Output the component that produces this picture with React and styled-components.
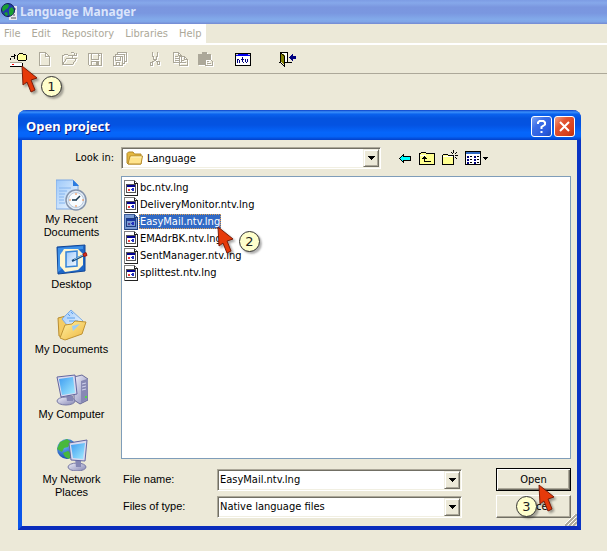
import React, { useState } from 'react'
import styled, { createGlobalStyle } from 'styled-components'

const GlobalStyle = createGlobalStyle`
  * {
    box-sizing: border-box;
  }
  body {
    margin: 0;
    background: #ece9d8;
    color: #000;
    font-family: "DejaVu Sans Condensed", "Liberation Sans", sans-serif;
    font-size: 11px;
    line-height: 13px;
  }
  button, input, select {
    margin: 0;
    padding: 0;
    border: 0;
    border-radius: 0;
    background: none;
    color: inherit;
    font: inherit;
    outline: none;
  }
`

/* main window */

const Page = styled.div`
  min-height: 100vh;
  overflow: hidden;
`

const TitleBar = styled.header`
  display: flex;
  align-items: center;
  gap: 3px;
  height: 24px;
  padding-left: 1px;
  background: linear-gradient(#7d9ce4, #86a8ea 12%, #7a96df 30%, #7a97e0 55%, #82aaea 80%, #80a6e8 90%, #7389d2);
`

const Title = styled.h1`
  margin: 0;
  color: #dbe5fb;
  font: bold 12px/20px "Noto Sans", sans-serif;
`

const MenuBar = styled.nav`
  display: flex;
  border-bottom: 2px solid #fff;
`

const MenuList = styled.div`
  display: flex;
  gap: 11px;
  height: 19px;
  padding: 0 4px;
  background: #fff;
`

const MenuButton = styled.button`
  color: #aca899;
  line-height: 19px;
`

const Toolbar = styled.div`
  display: flex;
  align-items: center;
  height: 29px;
  padding-left: 8px;
  border-bottom: 1px solid #aca899;
`

const ToolGroup = styled.div`
  display: flex;
  margin-right: ${props => props.$space || 0}px;
`

const ToolButton = styled.button`
  display: flex;
  align-items: center;
  justify-content: center;
  width: 25px;
  height: 24px;
`

/* numbered pointers */

const Anchor = styled.div`
  position: relative;
  display: flex;
`

const Pointer = styled.svg`
  position: absolute;
  z-index: 2;
  left: ${props => props.$x}px;
  top: ${props => props.$y}px;
  pointer-events: none;
  filter: drop-shadow(2px 2px 1px rgba(0, 0, 0, 0.35));
`

const Bubble = styled.span`
  position: absolute;
  z-index: 3;
  left: ${props => props.$x}px;
  top: ${props => props.$y}px;
  width: 21px;
  height: 21px;
  border: 1px solid #333;
  border-radius: 50%;
  background: #ffffcc;
  box-shadow: 2px 2px 2px rgba(0, 0, 0, 0.3);
  color: #222;
  font: 13px/19px "DejaVu Sans", sans-serif;
  text-align: center;
  pointer-events: none;
`

/* dialog */

const Dialog = styled.section`
  margin: 36px 26px 22px 18px;
  border: solid;
  border-width: 0 4px 4px;
  border-color: #0a4fe0 #0a34c4 #0a2cbc #0a55ea;
  border-radius: 8px 8px 0 0;
  background: #ece9d8;
`

const DialogTitle = styled.div`
  display: flex;
  align-items: center;
  gap: 2px;
  height: 30px;
  margin: 0 -4px;
  padding: 2px 6px 0 8px;
  border-radius: 8px 8px 0 0;
  background: linear-gradient(#0a3fc8, #3a8ffa 7%, #0a62ee 14%, #0453df 28%, #0453e2 50%, #0566fb 75%, #0564f8 88%, #0340c8);
`

const DialogHeading = styled.h2`
  flex: 1;
  margin: 0;
  color: #fff;
  font: bold 13px/20px "Noto Sans", sans-serif;
  text-shadow: 1px 1px 0 #0a1883;
`

const CaptionButton = styled.button`
  display: flex;
  align-items: center;
  justify-content: center;
  width: 21px;
  height: 21px;
  border: 1px solid #fff;
  border-radius: 3px;
  background: ${props => props.$close
    ? 'linear-gradient(135deg, #f0a088, #e25430 35%, #d8401c 75%, #b83010)'
    : 'linear-gradient(135deg, #7ea4f4, #3c6ee8 35%, #2a5ce0 75%, #1c48b8)'};
`

const Form = styled.form`
  position: relative;
  display: grid;
  grid-template-columns: 99px 1fr;
  padding: 7px 6px 8px 0;
`

const LookLabel = styled.label`
  padding-right: 7px;
  line-height: 22px;
  text-align: right;
`

const LookRow = styled.div`
  display: flex;
  align-items: center;
  margin-bottom: 7px;
`

const LookBox = styled.div`
  flex: 0 1 260px;
`

const NavTools = styled.div`
  display: flex;
  gap: 7px;
  margin-left: 17px;
`

const NavButton = styled.button`
  display: flex;
  height: 16px;
`

const ComboFrame = styled.div`
  display: flex;
  align-items: center;
  height: 22px;
  padding: 1px;
  border: 1px solid;
  border-color: #aca899 #fff #fff #aca899;
  background: #fff;
  box-shadow: inset 1px 1px 0 #716f64, inset -1px -1px 0 #f1efe2;
`

const comboText = `
  flex: 1;
  min-width: 0;
  height: 18px;
  padding: 0 1px;
  appearance: none;
`

const Select = styled.select`
  ${comboText}
`

const TextInput = styled.input`
  ${comboText}
`

const FolderSlot = styled.span`
  display: flex;
  padding: 0 2px 0 3px;
`

const Drop = styled.span`
  display: flex;
  align-items: center;
  justify-content: center;
  width: 16px;
  height: 18px;
  border: 1px solid;
  border-color: #f1efe2 #716f64 #716f64 #f1efe2;
  background: #ece9d8;
  box-shadow: inset 1px 1px 0 #fff, inset -1px -1px 0 #aca899;
  pointer-events: none;
`

const Places = styled.nav`
  padding-top: 3px;
`

const Place = styled.button`
  display: flex;
  flex-direction: column;
  align-items: center;
  gap: 2px;
  width: 99px;
  height: 65px;
  font-family: "Liberation Sans", sans-serif;
`

const PlaceLabel = styled.span`
  max-width: 80px;
`

const Main = styled.div`
  display: flex;
  flex-direction: column;
`

const FileList = styled.ul`
  height: 283px;
  margin: 0 0 9px;
  padding: 2px;
  border: 1px solid #7f9db9;
  background: #fff;
  list-style: none;
`

const FileItem = styled.li`
  display: flex;
  height: 17px;
`

const FileButton = styled.button`
  display: flex;
  align-items: center;
`

const FileName = styled.span`
  height: 15px;
  border: 1px dotted ${props => (props.$selected ? '#e0a050' : 'transparent')};
  background: ${props => (props.$selected ? '#316ac5' : 'transparent')};
  color: ${props => (props.$selected ? '#fff' : '#000')};
`

const Bottom = styled.div`
  display: grid;
  grid-template-columns: 94px 1fr 75px;
  row-gap: 4px;
  align-items: center;
  padding-left: 2px;
`

const FieldLabel = styled.label`
  font-family: "Liberation Sans", sans-serif;
`

const FieldBox = styled.div`
  margin-right: 34px;
`

const PushButton = styled.button`
  width: 75px;
  height: 23px;
  border: 1px solid;
  border-color: ${props => (props.$primary ? '#000' : '#fff #716f64 #716f64 #fff')};
  background: #ece9d8;
  box-shadow: ${props => (props.$primary
    ? 'inset 1px 1px 0 #fff, inset -1px -1px 0 #716f64, inset -2px -2px 0 #aca899'
    : 'inset -1px -1px 0 #aca899')};
`

const Grip = styled.svg`
  position: absolute;
  right: 0;
  bottom: 0;
`

/* icons */

const Pix = ({ w = 16, h = 16, children }) => (
  <svg width={w} height={h} viewBox={`0 0 ${w} ${h}`} fill="none" shapeRendering="crispEdges" aria-hidden="true">
    {children}
  </svg>
)

// greyed-out icon with its white edge one pixel down and right
const Disabled = ({ d, fill }) => (
  <Pix w={17} h={17}>
    <g transform="translate(1 1)">
      <path d={d} stroke="#fff" />
      {fill && <path d={fill} fill="#fff" />}
    </g>
    <path d={d} stroke="#aca899" />
    {fill && <path d={fill} fill="#aca899" />}
  </Pix>
)

const disabledIcons = {
  New: { d: 'M2.5 1.5h6l4 4v9h-10zM8.5 1.5v4h4' },
  Open: { d: 'M.5 13.5v-9h1l1-1h3l1 1h4v3M.5 13.5h10l4-6h-10l-4 6M8.5 2.5l1-1h2l1 1v2M11 4.5h3M14.5 2v3' },
  Save: { d: 'M1.5 2.5h13v12h-12l-1-1zM4.5 2.5v6h7v-6M4.5 14.5v-4h7v4M12.5 4v1', fill: 'M9 11h2v3h-2z' },
  'Save all': { d: 'M1.5 5.5h9v9h-9zM3.5 5v-1.5h9v9h-2M5.5 3v-1.5h9v9h-2M3.5 6v3h5v-3M4.5 14v-2.5h3v3' },
  Cut: { d: 'M5.5 1v4l1 1v2l4 3M10.5 1v4l-1 1v2l-4 3M3.5 11.5h2v3h-2zM10.5 10.5h2v3h-2z' },
  Copy: { d: 'M1.5 1.5h5l3 3v7h-8zM6.5 1.5v3h3M3 5.5h3M3 7.5h5M3 9.5h5M7.5 5.5h5l3 3v6h-8zM12.5 5.5v3h3M9 9.5h3M9 11.5h5' },
  Paste: { d: 'M8.5 8.5h5l2 2v4h-7zM10 10.5h2M10 12.5h4', fill: 'M1 3h4V1h5v2h4v5H8v6H1z' }
}

const disk = (
  <Pix w={23} h={17}>
    <path d="M9 4h1V3h4v1h3v5H9z" fill="#ffff9c" />
    <path d="M8.5 9V4M9 3.5h1M10 2.5h4M14 3.5h3M17.5 4v5M9 9.5h8" stroke="#000" />
    <path d="M1.5 8.5v-2M2 5.5h4M5 3.5h1M5 4.5h2M5 6.5h1M5 7.5h1" stroke="#000" />
    <path d="M1 11h12v4H1z" fill="#fff" />
    <path d="M1 11.500h12" stroke="#aca899" />
    <path d="M1 15.5h13M13.5 12v4" stroke="#000" />
    <path d="M3 13h2v1H3z" fill="#f00" />
  </Pix>
)

const ntv = (
  <Pix>
    <path d="M.5 2.5h15v12H.5z" fill="#fff" stroke="#000" />
    <path d="M1 3h14v2H1z" fill="#0000f0" />
    <path d="M1 3h2v1H1zM13 3h2v1h-2z" fill="#ccc" />
    <path d="M2.5 8v4M3 8.5h1M4.5 9v3M7.5 6v5M6 8.5h3M8 11.5h1M10.5 8v3M11.5 11v1M12.5 8v3" stroke="#000080" />
  </Pix>
)

const exit = (
  <Pix w={17} h={17}>
    <path d="M2 1h7v10H2z" fill="#fff" />
    <path d="M0 11.5h2M1.5 12V1.5h7v10M6 11.5h7" stroke="#000" />
    <path d="M2 2l4 2v11l-4-4z" fill="#808000" />
    <path d="M2 2.5h1M3 3.5h1M4 4.5h1M5.5 5v11M4 14.5h1M3 13.5h1M2 12.5h1" stroke="#000" />
    <path d="M10 6h1V5h1V4h1V3h1v2h3v3h-3v2h-1V9h-1V8h-1V7h-1z" fill="#000080" />
  </Pix>
)

const globe = (
  <svg width="16" height="18" viewBox="0 0 16 18" aria-hidden="true">
    <path d="M8 3h8v14H8z" fill="#e8e8f0" />
    <path d="M11 6h4M12 9h2M12 12h2M10 15h5" stroke="#555" />
    <circle cx="7" cy="7" r="6.5" fill="#2038a8" stroke="#111c58" />
    <path d="M2 3l4-2 2 1-1 3-3 2-2 2-1-3zM8 6l3-2 2 3-1 4-3 2-1-3zM3 10l3-1 1 3-2 1z" fill="#18a030" />
  </svg>
)

const folder = (
  <svg width="18" height="16" viewBox="0 0 18 16" aria-hidden="true">
    <path d="M1 13V3.5L2.5 2H7l1.5 2H15v10H2z" fill="#e4b840" stroke="#b48a28" />
    <path d="M2 14L4 6h12.5L15 14z" fill="#ffe48c" stroke="#b88d2c" />
    <path d="M5 7h10.5" stroke="#fff4c0" />
  </svg>
)

const back = (
  <Pix w={14}>
    <path d="M1 8h1V7h1V6h1V5h1v2h8v3H5v2H4v-1H3v-1H2V9H1z" fill="#0ff" />
    <path d="M1 8.5h1M2 7.5h1M3 6.5h1M4 5.5h1M5.5 4v3M5 6.5h8M12.5 7v4M5 10.5h8M5.5 10v3M4 11.5h1M3 10.5h1M2 9.5h1" stroke="#000" />
  </Pix>
)

const up = (
  <Pix>
    <path d="M.5 14.5v-11h1l1-1h4l1 1h8v11z" fill="#ffff90" stroke="#000" />
    <path d="M1 5.5h6" stroke="#fff" />
    <path d="M5.5 6v5.5h6M4 7.5h3M3 8.5h5" stroke="#000" />
  </Pix>
)

const newFolder = (
  <Pix>
    <path d="M.5 14.5v-9l1-1h4l1 1h5v9z" fill="#ffff90" stroke="#000" />
    <path d="M1 6.5h10" stroke="#fff" />
    <path d="M11.5 0v3M11.5 6v3M8 5.5h2M13 5.5h3M9 2.5h1M10 3.5h1M14 2.5h1M13 3.5h1M13 7.5h1M14 8.5h1" stroke="#000" />
  </Pix>
)

const views = (
  <Pix w={24}>
    <path d="M.5 1.5h15v13H.5z" fill="#fff" stroke="#000" />
    <path d="M1 2h14v2H1z" fill="#316ac5" />
    <path d="M2 6h2v2H2zM2 9h2v2H2zM2 12h2v2H2zM9 6h2v2H9zM9 9h2v2H9zM9 12h2v2H9z" fill="#000080" />
    <path d="M5 6.5h2M5 9.5h2M5 12.5h2M12 6.5h2M12 9.5h2M12 12.5h2" stroke="#000" />
    <path d="M18 7h5v1h-1v1h-1v1h-1V9h-1V8h-1z" fill="#000" />
  </Pix>
)

const FileIcon = ({ selected }) => (
  <Pix w={15}>
    <path d="M.5.5h10l3 3v12H.5z" fill={selected ? '#7a9cd4' : '#fff'} stroke={selected ? '#3c5c98' : '#808080'} />
    <path d="M10.5 1v2.5h3v12H1" stroke={selected ? '#20407c' : '#222'} />
    <path d="M2.5 4.5h9v8h-9z" fill={selected ? '#7a9cd4' : '#fff'} stroke={selected ? '#1c3c80' : '#555'} />
    <path d="M3 5h8v2H3z" fill={selected ? '#1838a0' : '#000090'} />
    <path d="M4 9h2v2H4z" fill={selected ? '#5a4890' : '#f04040'} />
    <path d="M7 9h1v-1h2v3H8v-1H7z" fill="#2030c0" />
  </Pix>
)

const arrow = (
  <Pix w={7} h={4}>
    <path d="M0 0h7v1H6v1H5v1H4v1H3V3H2V2H1V1H0z" fill="#000" />
  </Pix>
)

const Big = ({ children }) => (
  <svg width="32" height="32" viewBox="0 0 32 32" aria-hidden="true">{children}</svg>
)

const Gradients = () => (
  <svg width="0" height="0" display="block" aria-hidden="true">
    <defs>
      <linearGradient id="screen" x1="0" y1="0" x2="1" y2="1">
        <stop offset="0" stopColor="#3e9cf0" />
        <stop offset="1" stopColor="#a4ecff" />
      </linearGradient>
      <linearGradient id="paper" x1="0" y1="0" x2="1" y2="1">
        <stop offset="0" stopColor="#9cc8fa" />
        <stop offset="1" stopColor="#f4faff" />
      </linearGradient>
      <linearGradient id="metal" x1="0" y1="0" x2="1" y2="1">
        <stop offset="0" stopColor="#f0f0fa" />
        <stop offset="1" stopColor="#8486b4" />
      </linearGradient>
      <linearGradient id="gold" x1="0" y1="0" x2="1" y2="1">
        <stop offset="0" stopColor="#fff2a4" />
        <stop offset="1" stopColor="#efb63c" />
      </linearGradient>
      <radialGradient id="earth" cx="0.35" cy="0.3" r="0.8">
        <stop offset="0" stopColor="#72bcff" />
        <stop offset="1" stopColor="#0a3ca4" />
      </radialGradient>
    </defs>
  </svg>
)

const recent = (
  <Big>
    <path d="M0 1h17l5 5v24H0z" fill="url(#paper)" stroke="#7ca8e4" />
    <path d="M17 1v6h6z" fill="#2c7ce0" />
    <path d="M3 9h12M3 12h8M3 15h6M3 18h5M3 21h5M3 24h6" stroke="#84b4ee" />
    <circle cx="20" cy="21" r="10" fill="#e4eef8" stroke="#8494ac" strokeWidth="1.5" />
    <circle cx="20" cy="21" r="7.5" fill="#f8fcff" stroke="#b8c8dc" />
    <path d="M20 21l4-4M16 21h5" stroke="#16364c" strokeWidth="1.5" />
    <path d="M20 14v2M20 26v2M13 21h2M26 21h2" stroke="#f08840" />
  </Big>
)

const desktop = (
  <Big>
    <path d="M1 3l28-2v26L2 30z" fill="#1f68c8" stroke="#114798" />
    <path d="M2 4l25-2v3L6 7v18l-4 3z" fill="#3e91e8" />
    <path d="M8 5h14l5 5v11l-5 5-13 2-5-6V11z" fill="#fff6d0" />
    <path d="M10 8l11-1v15l-11 1z" fill="url(#paper)" stroke="#3484d8" strokeWidth="1.5" />
    <path d="M16 17l12-6" stroke="#174878" strokeWidth="2" />
    <path d="M18 15.500l9-4.500" stroke="#8ccaf8" />
    <path d="M27 10l3-1.5 1 3-3 1z" fill="#d83020" stroke="#a01810" />
  </Big>
)

const documents = (
  <Big>
    <path d="M2 9l8-2 3 3 6 10-7 10-9-3z" fill="#f4cc64" stroke="#b88c30" />
    <path d="M6 10L15 1l12 11-11 10z" fill="url(#paper)" stroke="#7cacE4" />
    <path d="M12 5l2 2M15 3l2 2M11 9h8M13 12h9" stroke="#5aa0ec" />
    <path d="M4 29l5-13 7-1 3-3 11 1-4 12-17 6z" fill="url(#gold)" stroke="#c09434" />
    <path d="M16 17l8-2-7 7z" fill="#9dcdf6" />
  </Big>
)

const computer = (
  <Big>
    <path d="M18 3l8-2 6 4v21l-8 4-6-4z" fill="url(#metal)" stroke="#686a98" />
    <path d="M25 7v22l6-4V5z" fill="#8789b4" />
    <path d="M26 10l4-1M26 13l4-1M26 16l4-1" stroke="#d2d4ee" />
    <path d="M29 22h2v2h-2z" fill="#50d848" />
    <ellipse cx="10" cy="27" rx="9" ry="4" fill="url(#metal)" stroke="#7779a4" />
    <path d="M10 20l7 2v5h-6z" fill="#8587b4" />
    <path d="M1 3l18-2 2 19-16 3z" fill="#d8daf0" stroke="#6466a0" />
    <path d="M3 5l14-2 2 16-13 2z" fill="url(#screen)" />
  </Big>
)

const network = (
  <Big>
    <circle cx="11" cy="10" r="10" fill="url(#earth)" />
    <path d="M4 3l7-3 4 3-3 5-4 1-2 4-5-3zM7 14l5-2 4 3-3 5-4-2z" fill="#48b83c" />
    <ellipse cx="21" cy="28" rx="9" ry="4" fill="url(#metal)" stroke="#7779a4" />
    <path d="M19 19l6 2v7h-5z" fill="#8587b4" />
    <path d="M13 4l18-3-2 21-14-1z" fill="#d8daf0" stroke="#6466a0" />
    <path d="M15 6l14-2-2 16-10-1z" fill="url(#screen)" />
  </Big>
)

const Cursor = ({ x, y }) => (
  <Pointer $x={x} $y={y} width="17" height="28" viewBox="-1 -1 17 28" aria-hidden="true">
    <path d="M0 0l1 19 4-3 4 10 4-2-4-10 6-2z" fill="#e63a0a" stroke="#7c1c08" />
  </Pointer>
)

const places = [
  { label: 'My Recent Documents', icon: recent },
  { label: 'Desktop', icon: desktop },
  { label: 'My Documents', icon: documents },
  { label: 'My Computer', icon: computer },
  { label: 'My Network Places', icon: network }
]

const files = [
  'bc.ntv.lng',
  'DeliveryMonitor.ntv.lng',
  'EasyMail.ntv.lng',
  'EMAdrBK.ntv.lng',
  'SentManager.ntv.lng',
  'splittest.ntv.lng'
]

const MainTool = ({ name }) => (
  <ToolButton aria-label={name} disabled>
    <Disabled {...disabledIcons[name]} />
  </ToolButton>
)

const App = () => {
  const [fileName, setFileName] = useState('EasyMail.ntv.lng')

  return (
    <Page>
      <GlobalStyle />
      <Gradients />
      <TitleBar>
        {globe}
        <Title>Language Manager</Title>
      </TitleBar>
      <MenuBar>
        <MenuList>
          {['File', 'Edit', 'Repository', 'Libraries', 'Help'].map(item => (
            <MenuButton key={item}>{item}</MenuButton>
          ))}
        </MenuList>
      </MenuBar>
      <Toolbar>
        <ToolGroup $space={10}>
          <Anchor>
            <ToolButton aria-label="Open project">{disk}</ToolButton>
            <Cursor x={13} y={18} />
            <Bubble $x={33} $y={29}>1</Bubble>
          </Anchor>
          <MainTool name="New" />
          <MainTool name="Open" />
          <MainTool name="Save" />
          <MainTool name="Save all" />
        </ToolGroup>
        <ToolGroup $space={12}>
          <MainTool name="Cut" />
          <MainTool name="Copy" />
          <MainTool name="Paste" />
        </ToolGroup>
        <ToolGroup $space={20}>
          <ToolButton aria-label="Native view">{ntv}</ToolButton>
        </ToolGroup>
        <ToolGroup>
          <ToolButton aria-label="Exit">{exit}</ToolButton>
        </ToolGroup>
      </Toolbar>

      <Dialog role="dialog" aria-labelledby="dialog-title">
        <DialogTitle>
          <DialogHeading id="dialog-title">Open project</DialogHeading>
          <CaptionButton aria-label="Help">
            <svg width="13" height="15" viewBox="0 0 13 15" fill="none" stroke="#fff" strokeWidth="2" aria-hidden="true">
              <path d="M3 5V3.5L4.5 2h4L10 3.5v2L6.5 8v2M6.5 12v2" />
            </svg>
          </CaptionButton>
          <CaptionButton $close aria-label="Close">
            <svg width="13" height="13" viewBox="0 0 13 13" stroke="#fff" strokeWidth="2" aria-hidden="true">
              <path d="M2 2l9 9M11 2l-9 9" />
            </svg>
          </CaptionButton>
        </DialogTitle>

        <Form onSubmit={e => e.preventDefault()}>
          <LookLabel htmlFor="look">Look in:</LookLabel>
          <LookRow>
            <LookBox>
              <ComboFrame>
                <FolderSlot>{folder}</FolderSlot>
                <Select id="look">
                  <option>Language</option>
                </Select>
                <Drop>{arrow}</Drop>
              </ComboFrame>
            </LookBox>
            <NavTools>
              <NavButton type="button" aria-label="Back">{back}</NavButton>
              <NavButton type="button" aria-label="Up one level">{up}</NavButton>
              <NavButton type="button" aria-label="New folder">{newFolder}</NavButton>
              <NavButton type="button" aria-label="Views">{views}</NavButton>
            </NavTools>
          </LookRow>

          <Places>
            {places.map(place => (
              <Place type="button" key={place.label}>
                {place.icon}
                <PlaceLabel>{place.label}</PlaceLabel>
              </Place>
            ))}
          </Places>

          <Main>
            <FileList>
              {files.map(file => (
                <FileItem key={file}>
                  <Anchor>
                    <FileButton type="button" onClick={() => setFileName(file)}>
                      <FileIcon selected={file === fileName} />
                      <FileName $selected={file === fileName}>{file}</FileName>
                    </FileButton>
                    {file === 'EasyMail.ntv.lng' && (
                      <>
                        <Cursor x={93} y={13} />
                        <Bubble $x={115} $y={18}>2</Bubble>
                      </>
                    )}
                  </Anchor>
                </FileItem>
              ))}
            </FileList>

            <Bottom>
              <FieldLabel htmlFor="name">File name:</FieldLabel>
              <FieldBox>
                <ComboFrame>
                  <TextInput id="name" value={fileName} onChange={e => setFileName(e.target.value)} />
                  <Drop>{arrow}</Drop>
                </ComboFrame>
              </FieldBox>
              <Anchor>
                <PushButton $primary type="submit">Open</PushButton>
                <Cursor x={42} y={16} />
                <Bubble $x={20} $y={28}>3</Bubble>
              </Anchor>
              <FieldLabel htmlFor="type">Files of type:</FieldLabel>
              <FieldBox>
                <ComboFrame>
                  <Select id="type">
                    <option>Native language files</option>
                  </Select>
                  <Drop>{arrow}</Drop>
                </ComboFrame>
              </FieldBox>
              <PushButton type="button">Cancel</PushButton>
            </Bottom>
          </Main>
          <Grip width="12" height="12" viewBox="0 0 12 12" aria-hidden="true">
            <path d="M0 12L12 0M4 12l8-8M8 12l4-4" stroke="#aca899" strokeWidth="2" />
            <path d="M-1 11L11-1M3 11l8-8M7 11l4-4" stroke="#fff" />
          </Grip>
        </Form>
      </Dialog>
    </Page>
  )
}

export default App
